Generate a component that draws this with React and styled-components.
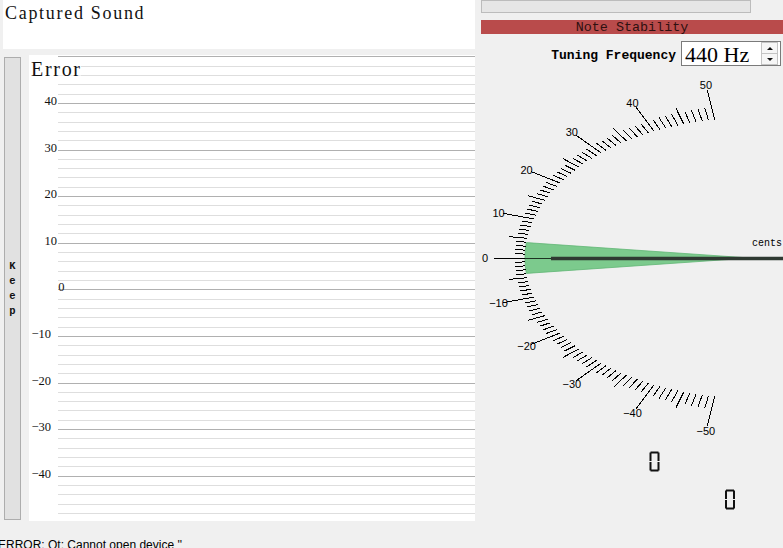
import React from "react";
import styled, { createGlobalStyle } from "styled-components";

const GlobalStyle = createGlobalStyle`
  html, body {
    margin: 0;
    padding: 0;
    background: #f0f0f0;
    overflow: hidden;
  }
  body {
    font-family: "Liberation Sans", Arial, sans-serif;
  }
`;

const Window = styled.div`
  width: 783px;
  height: 548px;
  display: flex;
  flex-direction: column;
  background: #f0f0f0;
  overflow: hidden;
`;

const Main = styled.div`
  display: flex;
  gap: 4px;
  height: 521px;
  flex-shrink: 0;
`;

const LeftColumn = styled.div`
  width: 476px;
  display: flex;
  flex-direction: column;
  gap: 6px;
`;

const CapturedPanel = styled.div`
  margin-left: 3px;
  width: 472px;
  height: 49px;
  box-sizing: border-box;
  padding: 3px 0 0 2px;
  background: #fff;
  font-family: "Liberation Serif", serif;
  font-size: 18px;
  line-height: 20px;
  letter-spacing: 1.7px;
  color: #111;
`;

const GraphRow = styled.div`
  display: flex;
  align-items: flex-start;
  height: 466px;
`;

const KeepButton = styled.div`
  margin: 2px 8px 0 4px;
  width: 17px;
  height: 463px;
  box-sizing: border-box;
  border: 1px solid #adadad;
  background: #e1e1e1;
  display: flex;
  flex-direction: column;
  align-items: center;
  justify-content: center;
  font-family: "Liberation Mono", monospace;
  font-weight: bold;
  font-size: 10.5px;
  line-height: 15px;
  color: #111;
`;

const ChartPanel = styled.div`
  width: 446px;
  height: 466px;
  background: #fff;
  overflow: hidden;
`;

const RightColumn = styled.div`
  width: 303px;
  display: flex;
  flex-direction: column;
`;

const LevelBar = styled.div`
  margin-left: 1px;
  width: 270px;
  height: 13px;
  box-sizing: border-box;
  border: 1px solid #bcbcbc;
  background: #e6e6e6;
`;

const StabilityBar = styled.div`
  margin: 7px 0 0 1px;
  height: 14px;
  background: #b94b4b;
  color: #2e1010;
  font-family: "Liberation Mono", monospace;
  font-size: 13.4px;
  line-height: 16px;
  text-align: center;
  overflow: hidden;
`;

const TuningRow = styled.div`
  margin-top: 7px;
  height: 25px;
  display: flex;
  align-items: center;
  justify-content: flex-end;
`;

const TuningLabel = styled.span`
  padding-top: 3px;
  font-family: "Liberation Mono", monospace;
  font-weight: bold;
  font-size: 13px;
  color: #000;
`;

const SpinBox = styled.div`
  margin: 0 2px 0 5px;
  width: 100px;
  height: 25px;
  box-sizing: border-box;
  border: 1px solid #7a7a7a;
  background: #fff;
  display: flex;
  align-items: center;
`;

const SpinValue = styled.span`
  flex: 1;
  padding: 2px 0 0 3px;
  font-family: "Liberation Serif", serif;
  font-size: 22px;
  line-height: 23px;
  color: #000;
`;

const SpinButtons = styled.div`
  width: 17px;
  height: 23px;
  margin-right: 2px;
  display: flex;
  flex-direction: column;
`;

const SpinButton = styled.div`
  flex: 1;
  display: flex;
  align-items: center;
  justify-content: center;
  box-sizing: border-box;
  border: 1px solid #c4c4c4;
  background: #f6f6f6;
  & + & {
    border-top: none;
  }
`;

const Arrow = styled.span`
  width: 0;
  height: 0;
  border-left: 3px solid transparent;
  border-right: 3px solid transparent;
  ${(p) => (p.$down ? "border-top: 3px solid #111;" : "border-bottom: 3px solid #111;")}
`;

const GaugeArea = styled.div`
  margin-top: 4px;
  height: 451px;
`;

const StatusBar = styled.div`
  height: 27px;
  box-sizing: border-box;
  padding-top: 17px;
  margin-left: -2px;
  font-family: "Liberation Sans", Arial, sans-serif;
  font-size: 12px;
  line-height: 14px;
  color: #000;
  white-space: nowrap;
`;

/* ---------- error history chart ---------- */

const CHART_W = 446;
const CHART_H = 466;
const ZERO_Y = 234.3;
const PX_PER_CENT = 4.66;

const gridValues = [];
for (let v = 50; v >= -50; v -= 2) gridValues.push(v);

function labelX(v) {
  if (v === 0) return { x: 29.3, anchor: "start" };
  return v > 0 ? { x: 28, anchor: "end" } : { x: 22, anchor: "end" };
}

function ErrorChart() {
  return (
    <svg width={CHART_W} height={CHART_H} style={{ display: "block" }}>
      <defs>
        <clipPath id="titleClip">
          <rect x="0" y="3" width="52" height="18" />
        </clipPath>
      </defs>
      <g shapeRendering="crispEdges">
        {gridValues.map((v) => {
          const y = Math.round(ZERO_Y - v * PX_PER_CENT) + 0.5;
          return (
            <line
              key={v}
              x1="29"
              x2={CHART_W}
              y1={y}
              y2={y}
              stroke={v % 10 === 0 ? "#b0b0b0" : "#dedede"}
              strokeWidth="1"
            />
          );
        })}
      </g>
      {gridValues
        .filter((v) => v % 10 === 0 && Math.abs(v) < 50)
        .map((v) => {
          const { x, anchor } = labelX(v);
          return (
            <text
              key={v}
              x={x}
              y={ZERO_Y - v * PX_PER_CENT + 2}
              textAnchor={anchor}
              fontFamily='"Liberation Serif", serif'
              fontSize="12.5"
              fill="#111"
            >
              {v < 0 ? `\u2212${-v}` : v}
            </text>
          );
        })}
      <rect x="0" y="3" width="52" height="17.5" fill="#fff" />
      <text
        x="2"
        y="21"
        clipPath="url(#titleClip)"
        fontFamily='"Liberation Serif", serif'
        fontSize="20"
        letterSpacing="1.7"
        fill="#111"
      >
        Error
      </text>
    </svg>
  );
}

/* ---------- tuner gauge ---------- */

const G = {
  cx: 270,
  cy: 188,
  a: 225,
  b: 140,
  step: (1.62 * Math.PI) / 180,
};

function onArc(c, r = 1) {
  const t = c * G.step;
  const x = G.cx - G.a * r * Math.cos(t);
  const y = G.cy - G.b * r * Math.sin(t);
  const dx = x - G.cx;
  const dy = y - G.cy;
  const len = Math.hypot(dx, dy);
  return { x, y, ux: dx / len, uy: dy / len };
}

const cents = [];
for (let c = -50; c <= 50; c++) cents.push(c);

function tickLength(c) {
  if (c % 10 === 0) return 31;
  if (c % 5 === 0) return 18;
  return 10 + (3 * Math.abs(c)) / 50;
}

function LcdZero({ x, y }) {
  // seven-segment style zero, 10 x 20
  return (
    <g transform={`translate(${x} ${y})`} fill="#111">
      <rect x="1" y="0" width="8" height="2" />
      <rect x="1" y="18" width="8" height="2" />
      <rect x="0" y="1" width="2" height="8.5" />
      <rect x="0" y="10.5" width="2" height="8.5" />
      <rect x="8" y="1" width="2" height="8.5" />
      <rect x="8" y="10.5" width="2" height="8.5" />
    </g>
  );
}

function TunerGauge() {
  const wedge = [];
  for (let c = -3.9; c <= 3.91; c += 0.65) {
    const p = onArc(c);
    wedge.push(`${p.x.toFixed(1)},${p.y.toFixed(1)}`);
  }
  wedge.push(`${G.cx},${G.cy}`);
  const zero = onArc(0);

  return (
    <svg width="303" height="451" style={{ display: "block" }}>
      <polygon points={wedge.join(" ")} fill="#7cca8d" stroke="#62b676" strokeWidth="0.8" />
      <line x1={zero.x} y1={G.cy + 0.5} x2="71" y2={G.cy + 0.5} stroke="#1d3322" strokeWidth="1" />
      <line x1="71" y1={G.cy + 0.5} x2="303" y2={G.cy + 0.5} stroke="#2f3a32" strokeWidth="3.4" />

      <g stroke="#000" strokeWidth="1" shapeRendering="crispEdges">
        {cents.map((c) => {
          const p = onArc(c);
          const l = tickLength(c);
          return (
            <line
              key={c}
              x1={p.x}
              y1={p.y}
              x2={p.x + p.ux * l}
              y2={p.y + p.uy * l}
            />
          );
        })}
      </g>

      {cents
        .filter((c) => c % 10 === 0)
        .map((c) => {
          const p = onArc(c);
          const d = c === 0 ? 40 : 36;
          return (
            <text
              key={c}
              x={p.x + p.ux * d}
              y={p.y + p.uy * d + 4}
              textAnchor="middle"
              fontFamily='"Liberation Sans", Arial, sans-serif'
              fontSize="11"
              fill="#000"
            >
              {c < 0 ? `\u2212${-c}` : c}
            </text>
          );
        })}

      <text x="272" y="176" fontFamily='"Liberation Mono", monospace' fontSize="10" fill="#000">
        cents
      </text>

      <LcdZero x={169.5} y={381.5} />
      <LcdZero x={245} y={419.5} />
    </svg>
  );
}

export default function App() {
  return (
    <>
      <GlobalStyle />
      <Window>
        <Main>
          <LeftColumn>
            <CapturedPanel>Captured Sound</CapturedPanel>
            <GraphRow>
              <KeepButton>
                {"Keep".split("").map((ch, i) => (
                  <span key={i}>{ch}</span>
                ))}
              </KeepButton>
              <ChartPanel>
                <ErrorChart />
              </ChartPanel>
            </GraphRow>
          </LeftColumn>
          <RightColumn>
            <LevelBar />
            <StabilityBar>Note Stability</StabilityBar>
            <TuningRow>
              <TuningLabel>Tuning Frequency</TuningLabel>
              <SpinBox>
                <SpinValue>440 Hz</SpinValue>
                <SpinButtons>
                  <SpinButton>
                    <Arrow />
                  </SpinButton>
                  <SpinButton>
                    <Arrow $down />
                  </SpinButton>
                </SpinButtons>
              </SpinBox>
            </TuningRow>
            <GaugeArea>
              <TunerGauge />
            </GaugeArea>
          </RightColumn>
        </Main>
        <StatusBar>ERROR: Qt: Cannot open device ''</StatusBar>
      </Window>
    </>
  );
}
